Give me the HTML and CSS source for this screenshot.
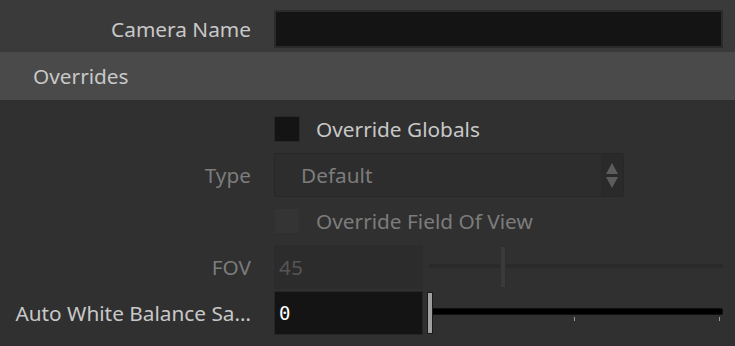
FILE: index.html
```html
<!DOCTYPE html>
<html lang="en">
<head>
  <meta charset="UTF-8">
  <title>Camera Parameters</title>
  <link rel="stylesheet" href="styles.css">
</head>
<body>

  <div class="top-band">
    <div class="row">
      <label class="label">Camera Name</label>
      <div class="text-field"></div>
    </div>
  </div>

  <div class="section-header">Overrides</div>

  <div class="section-body">
    <div class="row">
      <span class="label"></span>
      <div class="check-line">
        <span class="checkbox"></span>
        <span class="check-text">Override Globals</span>
      </div>
    </div>

    <div class="row">
      <span class="label disabled">Type</span>
      <div class="dropdown">
        <span class="dropdown-value">Default</span>
        <span class="dropdown-arrows">
          <svg width="12" height="25" viewBox="0 0 12 25">
            <path d="M6 0 L12 11 L0 11 Z" fill="#5c5c5c"/>
            <path d="M0 14 L12 14 L6 25 Z" fill="#5c5c5c"/>
          </svg>
        </span>
      </div>
    </div>

    <div class="row">
      <span class="label"></span>
      <div class="check-line">
        <span class="checkbox off"></span>
        <span class="check-text disabled">Override Field Of View</span>
      </div>
    </div>

    <div class="row">
      <span class="label disabled">FOV</span>
      <div class="num-line">
        <div class="num-field off">45</div>
        <div class="slider">
          <div class="track off"></div>
          <div class="handle off" style="left: 73px;"></div>
        </div>
      </div>
    </div>

    <div class="row">
      <span class="label" title="Auto White Balance Sample Size">Auto White Balance Sa…</span>
      <div class="num-line">
        <div class="num-field">0</div>
        <div class="slider">
          <div class="track"></div>
          <div class="tick" style="left: 147px;"></div>
          <div class="tick" style="left: 292px;"></div>
          <div class="handle" style="left: 0px;"></div>
        </div>
      </div>
    </div>
  </div>

</body>
</html>
```

FILE: styles.css
```css
html, body {
  margin: 0;
  height: 100%;
  overflow: hidden;
}
body {
  font-family: "Noto Sans", "Open Sans", sans-serif;
  font-size: 20.8px;
  color: #c8c8c8;
  background-color: #303030;
}
.row {
  display: grid;
  grid-template-columns: 243px 1fr;
  column-gap: 23px;
  align-items: center;
  height: 44px;
  padding: 0 12px 0 8px;
}
.label {
  text-align: right;
  white-space: nowrap;
  overflow: hidden;
  text-overflow: ellipsis;
  color: #c8c8c8;
}
.disabled {
  color: #7c7c7c;
}
.top-band {
  background-color: #3a3a3a;
  height: 52px;
  padding-top: 7px;
  box-sizing: border-box;
}
.text-field {
  height: 38px;
  box-sizing: border-box;
  border: 2px solid #2b2b2b;
  background-color: #141414;
}
.section-header {
  background-color: #4a4a4a;
  height: 48px;
  line-height: 48px;
  padding-left: 33px;
  color: #c8c8c8;
}
.section-body {
  display: flex;
  flex-direction: column;
  gap: 2px;
  padding-top: 7px;
}
.check-line {
  display: flex;
  align-items: center;
}
.checkbox {
  width: 26px;
  height: 26px;
  box-sizing: border-box;
  border: 1px solid #282828;
  background-color: #141414;
  margin-right: 16px;
}
.checkbox.off {
  border-color: #303030;
  background-color: #343434;
}
.dropdown {
  display: flex;
  height: 44px;
  width: 350px;
  box-sizing: border-box;
  border: 1px solid #272727;
  border-radius: 2px;
  background-color: #2d2d2d;
}
.dropdown-value {
  flex: 1;
  line-height: 42px;
  padding-left: 26px;
  color: #7c7c7c;
}
.dropdown-arrows {
  width: 22px;
  background-color: #2a2a2a;
  display: flex;
  align-items: center;
  justify-content: center;
}
.num-line {
  display: flex;
  align-items: center;
  height: 44px;
}
.num-field {
  width: 149px;
  height: 44px;
  box-sizing: border-box;
  border: 1px solid #262626;
  background-color: #141414;
  font-family: "DejaVu Sans Mono", monospace;
  font-size: 19px;
  line-height: 42px;
  padding-left: 4px;
  color: #ffffff;
}
.num-field.off {
  border-color: #2c2c2c;
  background-color: #2c2c2c;
  font-family: "Noto Sans", sans-serif;
  font-size: 20.8px;
  color: #555555;
}
.slider {
  position: relative;
  flex: 1;
  height: 44px;
  margin-left: 4px;
}
.track {
  position: absolute;
  left: 4px;
  right: 0;
  top: 17px;
  height: 5px;
  background-color: #000000;
  border: 1px solid #101010;
  border-radius: 2px;
}
.track.off {
  left: 2px;
  top: 19px;
  height: 4px;
  border: none;
  background-color: #2a2a2a;
}
.tick {
  position: absolute;
  top: 26px;
  width: 1px;
  height: 4px;
  background-color: #9a9a9a;
}
.handle {
  position: absolute;
  top: 1px;
  width: 4px;
  height: 40px;
  background-color: #a0a0a0;
  border: 1px solid #1a1a1a;
}
.handle.off {
  top: 1px;
  background-color: #3a3a3a;
  border-color: #2e2e2e;
  border-radius: 1px;
}
```
